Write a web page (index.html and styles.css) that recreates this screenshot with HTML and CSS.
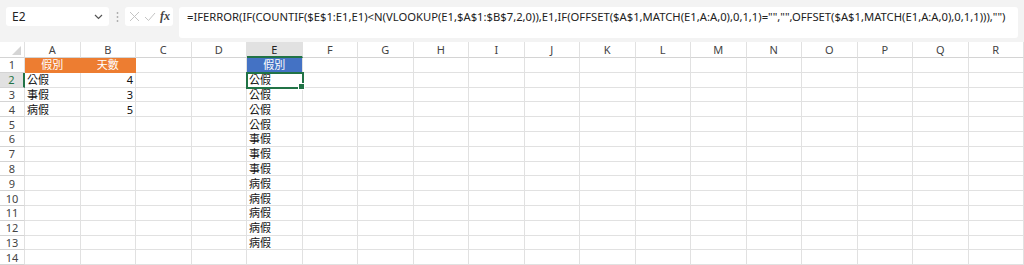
FILE: index.html
```html
<!DOCTYPE html>
<html lang="zh-Hant">
<head>
    <meta charset="UTF-8">
    <title>Excel 假別</title>
    <link rel="stylesheet" href="styles.css">
</head>
<body>
    <!-- Barra de fórmulas -->
    <div class="toolbar">
        <div class="namebox">
            <span>E2</span>
            <svg width="9" height="6" viewBox="0 0 9 6"><path d="M1 1 L4.5 4.5 L8 1" fill="none" stroke="#555" stroke-width="1.2"/></svg>
        </div>
        <div class="grip">
            <svg width="3" height="12" viewBox="0 0 3 12"><circle cx="1.5" cy="2" r="0.9" fill="#aaa"/><circle cx="1.5" cy="6" r="0.9" fill="#aaa"/><circle cx="1.5" cy="10" r="0.9" fill="#aaa"/></svg>
        </div>
        <div class="fxbox">
            <svg width="11" height="11" viewBox="0 0 11 11"><path d="M1 1 L10 10 M10 1 L1 10" stroke="#c4c4c4" stroke-width="1"/></svg>
            <svg width="12" height="10" viewBox="0 0 12 10"><path d="M1 5 L4.5 8.5 L11 1" fill="none" stroke="#c4c4c4" stroke-width="1"/></svg>
            <span class="fx">fx</span>
        </div>
        <div class="formula">=IFERROR(IF(COUNTIF($E$1:E1,E1)&lt;N(VLOOKUP(E1,$A$1:$B$7,2,0)),E1,IF(OFFSET($A$1,MATCH(E1,A:A,0),0,1,1)="","",OFFSET($A$1,MATCH(E1,A:A,0),0,1,1))),"")</div>
    </div>

    <!-- Hoja -->
    <div class="hoja" id="hoja"></div>

    <script>
        const columnas = "ABCDEFGHIJKLMNOPQR".split("");
        const datos = {
            "A1": "假別", "B1": "天數",
            "A2": "公假", "B2": "4",
            "A3": "事假", "B3": "3",
            "A4": "病假", "B4": "5",
            "E1": "假別",
            "E2": "公假", "E3": "公假", "E4": "公假", "E5": "公假",
            "E6": "事假", "E7": "事假", "E8": "事假",
            "E9": "病假", "E10": "病假", "E11": "病假", "E12": "病假", "E13": "病假"
        };
        const hoja = document.getElementById('hoja');

        function celda(clase, texto) {
            const div = document.createElement('div');
            div.className = clase;
            div.textContent = texto || "";
            hoja.appendChild(div);
            return div;
        }

        // Encabezados de columna
        celda('esquina');
        columnas.forEach(c => celda(c === 'E' ? 'col-head activo' : 'col-head', c));

        // Filas
        for (let f = 1; f <= 14; f++) {
            celda(f === 2 ? 'row-head activo' : 'row-head', f);
            columnas.forEach(c => {
                const ref = c + f;
                let clase = 'cell';
                if (ref === 'A1' || ref === 'B1') clase += ' naranja';
                if (ref === 'E1') clase += ' azul';
                if (c === 'B' && f > 1) clase += ' numero';
                if (ref === 'E2') clase += ' seleccion';
                celda(clase, datos[ref]);
            });
        }
    </script>
</body>
</html>
```

FILE: styles.css
```css
/* Cuerpo */
body {
    margin: 0;
    background-color: #fff;
    font-family: "Noto Sans", "Noto Sans CJK TC", sans-serif;
    overflow: hidden;
}

/* Barra superior */
.toolbar {
    height: 42px;
    background-color: #f3f3f3;
    display: flex;
    align-items: flex-start;
    padding: 7px 6px 0 6px;
    box-sizing: border-box;
}

.namebox {
    width: 103px;
    height: 19px;
    background-color: #fff;
    border-radius: 3px;
    display: flex;
    align-items: center;
    justify-content: space-between;
    padding: 0 6px 0 6px;
    box-sizing: border-box;
    font-size: 12px;
    color: #222;
}

.grip {
    width: 16px;
    height: 19px;
    display: flex;
    align-items: center;
    justify-content: center;
}

.fxbox {
    width: 48px;
    height: 19px;
    background-color: #fff;
    border-radius: 3px;
    display: flex;
    align-items: center;
    gap: 4px;
    padding-left: 4px;
    box-sizing: border-box;
}

.fx {
    font-family: "Liberation Serif", serif;
    font-style: italic;
    font-weight: bold;
    font-size: 12px;
    color: #444;
}

.formula {
    margin-left: 6px;
    width: 839px;
    height: 31px;
    background-color: #fff;
    border-radius: 3px;
    padding: 2px 0 0 8px;
    box-sizing: border-box;
    font-size: 11.25px;
    color: #222;
    white-space: nowrap;
    overflow: hidden;
}

/* Hoja de cálculo */
.hoja {
    display: grid;
    grid-template-columns: 25px repeat(18, 55.5px);
    grid-template-rows: 16px repeat(14, 14.8px);
}

.esquina,
.col-head,
.row-head {
    background-color: #fff;
    color: #444;
    font-size: 11px;
    box-sizing: border-box;
    border-right: 1px solid #e1e1e1;
    border-bottom: 1px solid #d4d4d4;
    display: flex;
    align-items: center;
    justify-content: center;
    line-height: 1;
}

.esquina {
    position: relative;
}

.esquina::after {
    content: "";
    position: absolute;
    right: 3px;
    bottom: 2px;
    border-left: 9px solid transparent;
    border-bottom: 9px solid #d5d5d5;
}

.col-head.activo {
    background-color: #e1e1e1;
    border-bottom: 2px solid #217346;
    color: #222;
}

.row-head.activo {
    background-color: #e1e1e1;
    border-right: 2px solid #217346;
    color: #217346;
}

.cell {
    box-sizing: border-box;
    border-right: 1px solid #e1e1e1;
    border-bottom: 1px solid #e1e1e1;
    font-size: 11px;
    color: #111;
    padding: 0 2px;
    display: flex;
    align-items: center;
    line-height: 1;
    position: relative;
}

.numero {
    justify-content: flex-end;
}

.naranja {
    background-color: #ed7d31;
    border-color: #ed7d31;
    color: #fff;
    justify-content: center;
}

.azul {
    background-color: #4472c4;
    color: #fff;
    justify-content: center;
}

/* Celda activa */
.seleccion {
    outline: 2px solid #217346;
    outline-offset: -1px;
    z-index: 2;
}

.seleccion::after {
    content: "";
    position: absolute;
    right: -3px;
    bottom: -3px;
    width: 5px;
    height: 5px;
    background-color: #217346;
    border: 1px solid #fff;
}
```
